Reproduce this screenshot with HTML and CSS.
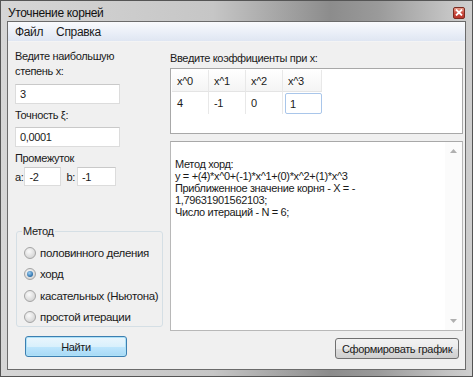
FILE: index.html
```html
<!DOCTYPE html>
<html>
<head>
    <title>Уточнение корней</title>
    <meta charset="utf-8">
    <link rel="stylesheet" href="styles.css">
</head>
<body>

<div class="window">
    <div class="titlebar">
        <span class="title">Уточнение корней</span>
        <span class="close">
            <svg width="8" height="7" viewBox="0 0 8 7"><path d="M1 0.5 L7 6.5 M7 0.5 L1 6.5" stroke="#fff" stroke-width="1.8"/></svg>
        </span>
    </div>
    <div class="client">
        <div class="menu">
            <span class="menu-item">Файл</span>
            <span class="menu-item">Справка</span>
        </div>
        <div class="content">
            <!-- left column: inputs and method -->
            <div class="left">
                <div class="label two-lines">Ведите наибольшую<br>степень x:</div>
                <div class="textbox">3</div>
                <div class="label">Точность ξ:</div>
                <div class="textbox">0,0001</div>
                <div class="label">Промежуток</div>
                <div class="range-row">
                    <span>a:</span>
                    <div class="textbox small">-2</div>
                    <span class="b-label">b:</span>
                    <div class="textbox small b-box">-1</div>
                </div>
                <fieldset class="group">
                    <legend>Метод</legend>
                    <div class="radio"><span class="dot"></span>половинного деления</div>
                    <div class="radio"><span class="dot checked"></span>хорд</div>
                    <div class="radio"><span class="dot"></span>касательных (Ньютона)</div>
                    <div class="radio"><span class="dot"></span>простой итерации</div>
                </fieldset>
                <div class="button primary">Найти</div>
            </div>

            <!-- right column: coefficients and output -->
            <div class="right">
                <div class="label">Введите коэффициенты при x:</div>
                <div class="grid">
                    <div class="grid-row header">
                        <div class="cell">x^0</div>
                        <div class="cell">x^1</div>
                        <div class="cell">x^2</div>
                        <div class="cell">x^3</div>
                    </div>
                    <div class="grid-row">
                        <div class="cell">4</div>
                        <div class="cell">-1</div>
                        <div class="cell">0</div>
                        <div class="cell selected">1</div>
                    </div>
                </div>
                <div class="output">
                    <div class="output-text"><br>Метод хорд:<br>y = +(4)*x^0+(-1)*x^1+(0)*x^2+(1)*x^3<br>Приближенное значение корня - X = -<br>1,79631901562103;<br>Число итераций - N = 6;</div>
                    <div class="scrollbar">
                        <svg width="7" height="4" viewBox="0 0 7 4"><path d="M0 4 L3.5 0 L7 4 Z" fill="#b0b0b0"/></svg>
                        <svg width="7" height="4" viewBox="0 0 7 4"><path d="M0 0 L3.5 4 L7 0 Z" fill="#b0b0b0"/></svg>
                    </div>
                </div>
                <div class="bottom-row">
                    <div class="button">Сформировать график</div>
                </div>
            </div>
        </div>
    </div>
</div>

</body>
</html>
```

FILE: styles.css
```css
body {
    margin: 0;
    background: #fff;
    font-family: 'Liberation Sans', Arial, sans-serif;
    font-size: 11px;
    letter-spacing: -0.35px;
    color: #1a1a1a;
}
.window {
    width: 473px;
    height: 377px;
    box-sizing: border-box;
    border: 1px solid #555;
    padding: 0 6px 6px 6px;
    background: linear-gradient(to right, #d6d6d6 0%, #c6c6c6 45%, #8c8c8c 70%, #9a9a9a 80%, #c4c4c4 95%, #cfcfcf 100%);
    display: flex;
    flex-direction: column;
}
.titlebar {
    height: 20px;
    display: flex;
    align-items: center;
    justify-content: space-between;
    flex-shrink: 0;
}
.title {
    font-size: 12px;
    color: #111;
    padding: 3px 0 0 1px;
}
.close {
    width: 12px;
    height: 12px;
    box-sizing: border-box;
    border: 1px solid #7a2a20;
    border-radius: 2px;
    background: linear-gradient(#e9a08e, #c8453a 55%, #b8362c);
    display: flex;
    align-items: center;
    justify-content: center;
    margin: 3px 1px 0 0;
}
.client {
    flex: 1;
    border: 1px solid #6b6b6b;
    background: #f0f0f0;
    display: flex;
    flex-direction: column;
}
.menu {
    height: 19px;
    background: linear-gradient(#f9fafd, #e9eef7 60%, #dfe6f2);
    border-bottom: 1px solid #f4f4f4;
    display: flex;
    align-items: center;
    padding-left: 7px;
    gap: 13px;
    font-size: 12px;
}
.content {
    flex: 1;
    display: flex;
}
.left {
    width: 150px;
    padding-left: 7px;
    display: flex;
    flex-direction: column;
}
.right {
    flex: 1;
    padding-left: 5px;
    padding-right: 2px;
    display: flex;
    flex-direction: column;
}
.label {
    line-height: 14px;
}
.left .two-lines {
    margin-top: 7px;
    line-height: 15px;
}
.textbox {
    width: 105px;
    height: 20px;
    box-sizing: border-box;
    margin: 5px 0 4px 0;
    background: #fff;
    border: 1px solid #dcdcdc;
    border-top-color: #c9c9c9;
    padding: 3px 4px;
    line-height: 13px;
}
.range-row {
    display: flex;
    align-items: center;
    margin-top: 2px;
}
.range-row .textbox {
    margin: 0;
    height: 19px;
}
.textbox.small {
    width: 37px;
    margin-left: 1px;
}
.b-label {
    margin-left: 5px;
}
.textbox.b-box {
    width: 39px;
    margin-left: 2px;
}
.group {
    margin: 39px 0 0 1px;
    width: 147px;
    box-sizing: border-box;
    height: 102px;
    border: 1px solid #d5dfe5;
    border-radius: 3px;
    padding: 5px 0 0 7px;
}
.group legend {
    padding: 0 1px;
    margin-left: -2px;
}
.radio {
    display: flex;
    align-items: center;
    height: 21.5px;
    white-space: nowrap;
    font-size: 11.5px;
}
.dot {
    width: 12px;
    height: 12px;
    flex-shrink: 0;
    box-sizing: border-box;
    border-radius: 50%;
    border: 1px solid #a4a4a4;
    background: radial-gradient(circle at 40% 35%, #fafafa, #d8d8d8 70%, #c8c8c8);
    margin-right: 4px;
    position: relative;
}
.dot.checked::after {
    content: '';
    position: absolute;
    left: 2px;
    top: 2px;
    width: 6px;
    height: 6px;
    border-radius: 50%;
    background: radial-gradient(circle at 40% 35%, #9fd0f5, #2a6ea8 70%, #1d4f86);
}
.button {
    height: 21px;
    box-sizing: border-box;
    border: 1px solid #707070;
    border-radius: 3px;
    background: linear-gradient(#f2f2f2, #ebebeb 50%, #dddddd 51%, #cfcfcf);
    display: flex;
    align-items: center;
    justify-content: center;
    font-size: 11px;
}
.button.primary {
    width: 102px;
    margin: 9px 0 0 10px;
    border-color: #3c7fb1;
    box-shadow: inset 0 0 0 1px #aee1f7;
    background: linear-gradient(#eaf6fd, #d9f0fc 50%, #bee6fd 51%, #a7d9f5);
}
.right .label {
    margin-top: 9px;
}
.grid {
    margin-top: 3px;
    height: 66px;
    box-sizing: border-box;
    border: 1px solid #a8a8a8;
    background: #fff;
    padding: 1px;
}
.grid-row {
    display: flex;
    height: 22px;
}
.grid-row.header .cell {
    background: linear-gradient(#ffffff, #f4f4f4);
    border-bottom: 1px solid #e4e4e4;
}
.cell {
    width: 37px;
    box-sizing: border-box;
    border-right: 1px solid #e8e8e8;
    padding: 5px 0 0 5px;
}
.grid-row .cell:nth-child(4) {
    width: 39px;
}
.cell.selected {
    border: 1px solid #a9c6ea;
    border-radius: 2px;
    padding: 4px 0 0 4px;
    margin: 1px 0 0 2px;
    width: 37px !important;
}
.output {
    margin-top: 7px;
    height: 190px;
    box-sizing: border-box;
    border: 1px solid #b8b8b8;
    border-top-color: #a8a8a8;
    background: #fff;
    display: flex;
}
.output-text {
    flex: 1;
    padding: 4px 0 0 4px;
    line-height: 12px;
}
.scrollbar {
    width: 17px;
    background: #fbfbfb;
    display: flex;
    flex-direction: column;
    justify-content: space-between;
    align-items: center;
    padding: 7px 0 7px 0;
}
.bottom-row {
    display: flex;
    justify-content: flex-end;
    margin-top: 7px;
    padding-right: 4px;
}
.bottom-row .button {
    width: 124px;
}
```
